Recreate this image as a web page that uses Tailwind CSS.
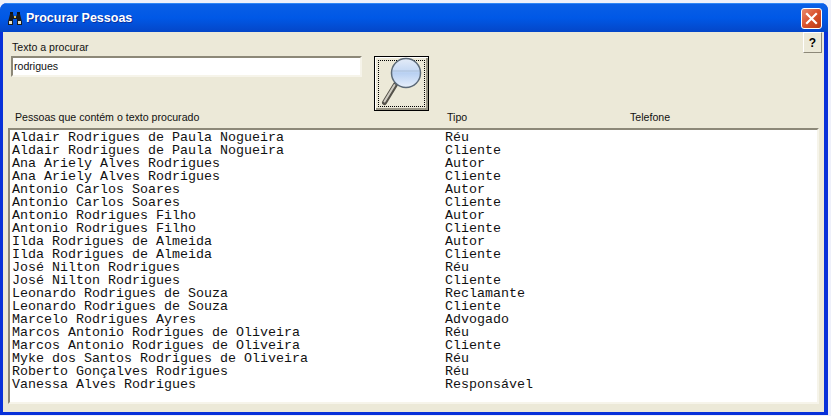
<!DOCTYPE html>
<html>
<head>
<meta charset="utf-8">
<script src="https://cdn.jsdelivr.net/npm/@tailwindcss/browser@4"></script>
</head>
<body class="m-0 w-[831px] h-[416px] overflow-hidden bg-[#eef0fa] font-['Liberation_Sans',sans-serif]">
<div class="w-[831px] pt-[3px]">
  <div class="w-[828px] h-[412px] flex flex-col rounded-t-[7px] bg-[#0831d9] overflow-hidden">
    <div class="h-[29px] shrink-0 flex items-center pl-[7px] pr-[6px] bg-gradient-to-b from-[#0a5fe6] via-[#0058e6] to-[#0446c8] border-t border-[#2f86f5]">
      <svg width="16" height="13" viewBox="0 0 16 13" class="shrink-0">
        <rect x="3" y="0" width="3" height="3" fill="#111"/><rect x="10" y="0" width="3" height="3" fill="#111"/>
        <path d="M3 2h3l1 3h2l1-3h3l2 8v3H10V7H6v6H1v-3z" fill="#1a1a1a"/>
        <rect x="2" y="9" width="3" height="3" fill="#e8e4c8"/><rect x="11" y="9" width="3" height="3" fill="#e8e4c8"/>
        <rect x="7" y="4" width="2" height="2" fill="#d8c060"/>
      </svg>
      <span class="ml-[3px] text-white font-bold text-[12.5px] [text-shadow:1px_1px_0_#0a2f9c]">Procurar Pessoas</span>
      <div class="ml-auto w-[21px] h-[21px] rounded-[3px] border border-white bg-gradient-to-br from-[#e88a6c] via-[#d9512c] to-[#b93a14] flex items-center justify-center">
        <svg width="13" height="13" viewBox="0 0 13 13"><path d="M2 2l9 9M11 2l-9 9" stroke="#fff" stroke-width="2.2" stroke-linecap="square"/></svg>
      </div>
    </div>
    <div class="flex-1 ml-[3px] mr-[4px] mb-[3px] bg-[#ece9d8] flex flex-col pl-[5px] pr-[2px] text-[10.6px] text-[#111]">
      <div class="h-[79px] shrink-0 flex items-start">
        <div class="w-[351px] ml-[3px] pt-[9px] flex flex-col">
          <span class="h-[15px] leading-[13px] pl-px">Texto a procurar</span>
          <div class="h-[21px] bg-white border-2 border-t-[#8c8878] border-l-[#8c8878] border-r-[#f6f4ea] border-b-[#f6f4ea] flex items-center pl-px leading-none">rodrigues</div>
        </div>
        <div class="ml-[12px] mt-[24px] w-[55px] h-[55px] shrink-0 border border-black bg-[#ece9d8] shadow-[inset_1px_1px_0_#fff,inset_-2px_-2px_0_#9a9686] p-[3px]">
          <div class="w-full h-full border border-dotted border-black flex items-center justify-center">
            <svg width="44" height="44" viewBox="0 0 44 44" class="overflow-visible">
              <defs>
                <linearGradient id="g" x1="0" y1="0" x2="0" y2="1"><stop offset="0" stop-color="#e4ecf8"/><stop offset="0.45" stop-color="#c4d8f4"/><stop offset="0.5" stop-color="#b8d0f2"/><stop offset="1" stop-color="#e8f0fc"/></linearGradient>
              </defs>
              <path d="M4.5 40.5L15.5 22.5" stroke="#55524a" stroke-width="5" stroke-linecap="round"/>
              <path d="M4.5 39.5L14.5 23" stroke="#cfccc2" stroke-width="2" stroke-linecap="round"/>
              <circle cx="26" cy="11" r="14.5" fill="url(#g)" stroke="#5c6a78" stroke-width="1.5"/>
              <path d="M13 9h26" stroke="#a8bdd8" stroke-width="1"/>
            </svg>
          </div>
        </div>
        <div class="ml-auto w-[19px] h-[21px] shrink-0 border border-t-white border-l-white border-r-[#8c8878] border-b-[#8c8878] flex items-center justify-center font-bold text-[12px] text-black">?</div>
      </div>
      <div class="h-[13px] shrink-0 flex leading-[13px] mb-[4px]">
        <span class="ml-[7px] w-[432px]">Pessoas que contém o texto procurado</span>
        <span class="w-[183px]">Tipo</span>
        <span>Telefone</span>
      </div>
      <div class="h-[276px] w-[811px] shrink-0 bg-white border-2 border-t-[#8c8878] border-l-[#8c8878] border-r-[#f6f4ea] border-b-[#f6f4ea] pl-[2px] pt-px font-['Liberation_Mono',monospace] text-[13.33px] leading-[13px] text-[#111]">
        <div class="flex h-[13px]"><span class="w-[433px]">Aldair Rodrigues de Paula Nogueira</span><span>Réu</span></div>
        <div class="flex h-[13px]"><span class="w-[433px]">Aldair Rodrigues de Paula Nogueira</span><span>Cliente</span></div>
        <div class="flex h-[13px]"><span class="w-[433px]">Ana Ariely Alves Rodrigues</span><span>Autor</span></div>
        <div class="flex h-[13px]"><span class="w-[433px]">Ana Ariely Alves Rodrigues</span><span>Cliente</span></div>
        <div class="flex h-[13px]"><span class="w-[433px]">Antonio Carlos Soares</span><span>Autor</span></div>
        <div class="flex h-[13px]"><span class="w-[433px]">Antonio Carlos Soares</span><span>Cliente</span></div>
        <div class="flex h-[13px]"><span class="w-[433px]">Antonio Rodrigues Filho</span><span>Autor</span></div>
        <div class="flex h-[13px]"><span class="w-[433px]">Antonio Rodrigues Filho</span><span>Cliente</span></div>
        <div class="flex h-[13px]"><span class="w-[433px]">Ilda Rodrigues de Almeida</span><span>Autor</span></div>
        <div class="flex h-[13px]"><span class="w-[433px]">Ilda Rodrigues de Almeida</span><span>Cliente</span></div>
        <div class="flex h-[13px]"><span class="w-[433px]">José Nilton Rodrigues</span><span>Réu</span></div>
        <div class="flex h-[13px]"><span class="w-[433px]">José Nilton Rodrigues</span><span>Cliente</span></div>
        <div class="flex h-[13px]"><span class="w-[433px]">Leonardo Rodrigues de Souza</span><span>Reclamante</span></div>
        <div class="flex h-[13px]"><span class="w-[433px]">Leonardo Rodrigues de Souza</span><span>Cliente</span></div>
        <div class="flex h-[13px]"><span class="w-[433px]">Marcelo Rodrigues Ayres</span><span>Advogado</span></div>
        <div class="flex h-[13px]"><span class="w-[433px]">Marcos Antonio Rodrigues de Oliveira</span><span>Réu</span></div>
        <div class="flex h-[13px]"><span class="w-[433px]">Marcos Antonio Rodrigues de Oliveira</span><span>Cliente</span></div>
        <div class="flex h-[13px]"><span class="w-[433px]">Myke dos Santos Rodrigues de Oliveira</span><span>Réu</span></div>
        <div class="flex h-[13px]"><span class="w-[433px]">Roberto Gonçalves Rodrigues</span><span>Réu</span></div>
        <div class="flex h-[13px]"><span class="w-[433px]">Vanessa Alves Rodrigues</span><span>Responsável</span></div>
      </div>
    </div>
  </div>
</div>
</body>
</html>
